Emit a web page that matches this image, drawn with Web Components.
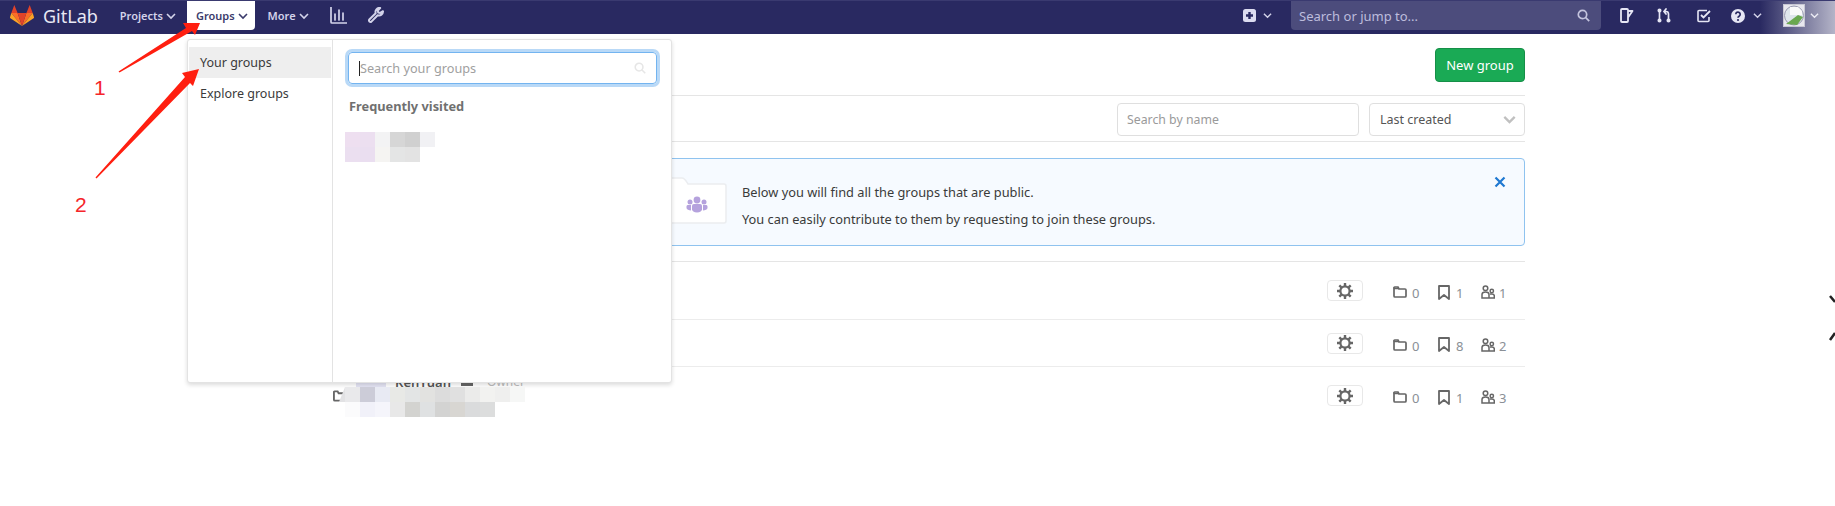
<!DOCTYPE html>
<html lang="en">
<head>
<meta charset="utf-8">
<title>Groups · GitLab</title>
<style>
html,body{margin:0;padding:0;background:#fff;}
body{width:1835px;height:506px;position:relative;overflow:hidden;font:13px/18px "Noto Sans","Open Sans",sans-serif;color:#2e2e2e;}
</style>
</head>
<body>
<gl-navbar></gl-navbar>
<gl-page>
  <group-row slot="rows" height="58" folders="0" projects="1" members="1"></group-row>
  <group-row slot="rows" height="47" folders="0" projects="8" members="2"></group-row>
  <group-row slot="rows" height="57" folders="0" projects="1" members="3" name="KenYuan" role="Owner"></group-row>
</gl-page>
<gl-groups-dropdown></gl-groups-dropdown>
<blur-mosaic style="left:345px;top:132px" rows="eedff0,ecdff0,f3f3f4,d6d6d6,d0d0d0,f1f1f4|ebdff0,eadef0,f5f4f2,e4e5e5,e3e3e3"></blur-mosaic>
<blur-mosaic wedge style="left:345px;top:387px" rows="e9e9eb,ccccd8,e8eaf3,e8e9e6,e3e5e5,e2e2e0,dcdcdc,e0e0e0,ebebea,f2f2f0,efefee,f6f7f6|fbfbfc,f1f1f9,f5f5fb,e8e8e8,d3d3d0,dfe1e2,d3d3d2,d8d6d2,dadbdc,dcdddd"></blur-mosaic>
<red-annotations></red-annotations>
<edge-marks></edge-marks>

<script>
const NS = '"Noto Sans","Open Sans",sans-serif';
const chev = (w=9,c='currentColor',sw=1.7)=>`<svg width="${w}" height="${w}" viewBox="0 0 10 10" fill="none" stroke="${c}" stroke-width="${sw}"><path d="M1 3l4 4 4-4"/></svg>`;

class Base extends HTMLElement{
  render(html){ if(!this.shadowRoot) this.attachShadow({mode:'open'}); this.shadowRoot.innerHTML = html; }
}

class NavLink extends Base{
  connectedCallback(){
    const active = this.hasAttribute('active');
    this.render(`<style>
      :host{display:flex;align-items:center;gap:3px;height:29px;box-sizing:border-box;font-weight:600;font-size:11px;
        padding:0 9px;color:${active?'#3b3b6b':'#d3d3ea'};background:${active?'#fff':'transparent'};border-radius:${active?'0 0 4px 4px':'0'};}
      svg{display:block}
    </style><slot></slot>${chev(10,'currentColor',1.6)}`);
  }
}
customElements.define('nav-link',NavLink);

class GlNavbar extends Base{
  connectedCallback(){
    this.render(`<style>
      :host{display:flex;box-sizing:border-box;height:34px;border-top:1px solid #3a3a70;align-items:flex-start;color:#d3d3ea;
        background:linear-gradient(90deg,#292961 0,#292961 1760px,#b4b4c8 1835px);font-family:${NS};}
      .logo{display:flex;align-items:center;height:29px;margin-left:10px;gap:9px;color:#e8e8f4;font-size:18px;}
      svg{display:block;flex:none}
      .links{display:flex;}
      .ic{margin-top:6px}
      .search{box-sizing:border-box;width:310px;height:29px;background:#4c4c7c;border-radius:0 0 4px 4px;display:flex;align-items:center;justify-content:space-between;padding:0 11px 0 8px;color:#bdbddc;font-size:13px;margin-left:19px;}
      .right{margin-left:auto;display:flex;align-items:flex-start;}
      .pad{height:29px;display:flex;align-items:center;}
    </style>
    <div class="logo">
      <svg width="24" height="21" viewBox="0 0 24 21"><path fill="#fc6d26" d="M12 21L7.6 8H1.3zM12 21l4.4-13h6.3z"/><path fill="#e24329" d="M12 21L7.6 8h8.8zM1.3 8l3-8 3.3 8zM22.7 8l-3-8-3.3 8z"/><path fill="#fca326" d="M1.3 8L0 12.3c-.1.4 0 .8.4 1L12 21zM22.7 8l1.3 4.3c.1.4 0 .8-.4 1L12 21z"/></svg>
      <span>GitLab</span>
    </div>
    <div class="links" style="margin-left:13px">
      <nav-link style="padding:0 9px 0 9px;margin-right:2px">Projects</nav-link>
      <nav-link active style="padding:0 7px 0 9px">Groups</nav-link>
      <nav-link style="margin-left:4px">More</nav-link>
    </div>
    <svg class="ic" style="margin-left:12px" width="17" height="17" viewBox="0 0 17 17" fill="none" stroke="#d3d3ea" stroke-width="1.7"><path d="M1 0v15c0 .6.4 1 1 1h15"/><path d="M5 7v6M9 3v10M13 6v7" stroke-linecap="round"/></svg>
    <svg class="ic" style="margin-left:21px" width="16" height="16" viewBox="0 0 16 16" fill="none" stroke="#d3d3ea" stroke-width="2" stroke-linejoin="round"><path d="M15 4.2a4 4 0 0 1-5.3 4L3.400 14.600a1.500 1.500 0 0 1-2.100-2.100L7.700 6.200A4 4 0 0 1 12.200 1L9.800 3.500l.4 2 2 .4z"/></svg>
    <div class="right">
      <div class="pad" style="gap:7px">
        <svg width="13" height="13" viewBox="0 0 13 13"><rect width="13" height="13" rx="2.500" fill="#dcdcf0"/><path d="M6.500 3v7M3 6.500h7" stroke="#292961" stroke-width="2.400"/></svg>
        ${chev(9,'#d3d3ea',1.5)}
      </div>
      <div class="search"><span>Search or jump to...</span>
        <svg width="13" height="13" viewBox="0 0 13 13" fill="none" stroke="#c4c4de" stroke-width="1.700"><circle cx="5.500" cy="5.500" r="4.200"/><path d="M8.700 8.700l3.500 3.500"/></svg>
      </div>
      <div class="pad" style="margin-left:18px;width:14px">
        <svg width="15" height="15" viewBox="0 0 15 15" fill="none" stroke="#e6e6f4" stroke-width="1.800" stroke-linejoin="round"><path d="M2 2a1 1 0 0 1 1-1h5a1 1 0 0 1 1 1v11a1 1 0 0 1-1 1H3a1 1 0 0 1-1-1zM9 3h4.500L9 9.500"/></svg>
      </div>
      <div class="pad" style="margin-left:24px;width:14px">
        <svg width="15" height="15" viewBox="0 0 15 15" fill="none" stroke="#e6e6f4" stroke-width="1.700" stroke-linecap="round"><path d="M2.500 3v9M11.500 12V6a2.500 2.500 0 0 0-2.500-2.500H7.500M9 1L7 3.500 9 6"/><circle cx="2.500" cy="2.500" r="1.200" fill="#e6e6f4"/><circle cx="2.500" cy="12.500" r="1.200" fill="#e6e6f4"/><circle cx="11.500" cy="12.500" r="1.200" fill="#e6e6f4"/></svg>
      </div>
      <div class="pad" style="margin-left:26px;width:13px">
        <svg width="14" height="14" viewBox="0 0 14 14" fill="none" stroke="#e6e6f4" stroke-width="1.600"><path d="M12 8v3.500a1 1 0 0 1-1 1H2a1 1 0 0 1-1-1v-9a1 1 0 0 1 1-1h8"/><path d="M4 6l2.500 2.500L13 2" stroke-width="1.800"/></svg>
      </div>
      <div class="pad" style="margin-left:21px;gap:8px">
        <svg width="14" height="14" viewBox="0 0 14 14"><circle cx="7" cy="7" r="7" fill="#e6e6f4"/><path d="M4.800 5.200a2.200 2.200 0 1 1 3.300 2c-.8.5-1.100.8-1.100 1.600" fill="none" stroke="#292961" stroke-width="1.700"/><circle cx="7" cy="11" r="1.100" fill="#292961"/></svg>
        ${chev(9,'#d3d3ea',1.500)}
      </div>
      <div class="pad" style="margin-left:21px;gap:5px;margin-right:16px">
        <svg width="22" height="23" viewBox="0 0 22 23"><rect x=".5" y=".5" width="21" height="22" fill="#e8e8ee" stroke="#c8c8d4"/><circle cx="11" cy="11.500" r="9.500" fill="#dfe6ec" stroke="#9a9ab0"/><path d="M3 20l12-9 5 2-6 8z" fill="#6aa84f"/><path d="M7 3h8l4 4v4H7z" fill="#fafafa"/></svg>
        ${chev(9,'#ececf4',1.500)}
      </div>
    </div>`);
  }
}
customElements.define('gl-navbar',GlNavbar);

class GlPage extends Base{
  connectedCallback(){
    this.render(`<style>
      :host{display:block;box-sizing:border-box;width:1192px;margin-left:333px;font-family:${NS};font-size:13px;color:#2e2e2e;}
      .head{display:flex;justify-content:flex-end;align-items:center;height:62px;border-bottom:1px solid #e5e5e5;box-sizing:border-box;}
      .btn{box-sizing:border-box;width:90px;height:34px;background:#1aaa55;border:1px solid #168f48;border-radius:4px;color:#fff;display:flex;align-items:center;justify-content:center;font-size:13px;}
      .filter{display:flex;justify-content:flex-end;gap:10px;height:46px;box-sizing:border-box;padding-top:7px;border-bottom:1px solid #e5e5e5;}
      .input,.select{box-sizing:border-box;height:33px;border:1px solid #dfdfdf;border-radius:4px;display:flex;align-items:center;padding:0 9px;background:#fff;}
      .input{width:242px;color:#9a9a9a;font-size:12.300px;}
      .select{width:156px;padding:0 8px 0 10px;justify-content:space-between;color:#555;font-size:12.500px;}
      .rows{border-top:1px solid #e5e5e5;margin-top:15px;}
    </style>
    <div class="head"><div class="btn">New group</div></div>
    <div class="filter">
      <div class="input">Search by name</div>
      <div class="select"><span>Last created</span>${chev(13,'#c0c0c0',1.800)}</div>
    </div>
    <gl-callout></gl-callout>
    <div class="rows"><slot name="rows"></slot></div>`);
  }
}
customElements.define('gl-page',GlPage);

class GlCallout extends Base{
  connectedCallback(){
    this.render(`<style>
      :host{display:flex;box-sizing:border-box;height:88px;margin-top:16px;background:#f6faff;border:1px solid #8fc3ef;border-radius:4px;position:relative;font-size:12.800px;color:#3a3a3a;}
      .art{flex:none;margin-left:326px;margin-top:18px}
      .text{margin-left:14px;display:flex;flex-direction:column;gap:9px;padding-top:24px;}
      .x{position:absolute;right:18px;top:17px;}
      svg{display:block}
    </style>
    <svg class="art" width="68" height="48" viewBox="0 0 68 48"><path d="M0 1h22c3 0 4 3 6 6h36a2 2 0 0 1 2 2v35a2 2 0 0 1-2 2H0" fill="#fff" stroke="#ebedf0" stroke-width="1.500"/>
      <g fill="#b5a2dd" transform="translate(-49 -1)"><circle cx="86" cy="24" r="3.400"/><circle cx="79" cy="26" r="2.500"/><circle cx="93" cy="26" r="2.500"/><path d="M81 30a2 2 0 0 1 2-2h6a2 2 0 0 1 2 2v3.500c0 1.500-2 3-5 3s-5-1.500-5-3z"/><path d="M75.500 30.500c0-1 .8-1.500 1.500-1.500h3v5.500c-2 0-4.500-1-4.500-2.500zM96.500 30.500c0-1-.8-1.500-1.500-1.500h-3v5.500c2 0 4.500-1 4.500-2.500z"/></g></svg>
    <div class="text"><div>Below you will find all the groups that are public.</div><div>You can easily contribute to them by requesting to join these groups.</div></div>
    <svg class="x" width="12" height="12" viewBox="0 0 12 12" stroke="#1f78d1" stroke-width="2.200" fill="none"><path d="M1.500 1.500l9 9M10.500 1.500l-9 9"/></svg>`);
  }
}
customElements.define('gl-callout',GlCallout);

class StatItem extends Base{
  connectedCallback(){
    const k=this.getAttribute('kind');
    const icons={
      folder:`<svg width="14" height="12" viewBox="0 0 14 12" fill="none" stroke="#666" stroke-width="1.700"><path d="M1 2.500V10a1 1 0 0 0 1 1h10a1 1 0 0 0 1-1V4a1 1 0 0 0-1-1H6L5 1H2a1 1 0 0 0-1 1.500z"/><path d="M1 2.500h5" stroke-width="1.500"/></svg>`,
      book:`<svg width="12" height="15" viewBox="0 0 12 15" fill="none" stroke="#666" stroke-width="1.800" stroke-linejoin="round"><path d="M1 1h10v13l-5-4-5 4z"/></svg>`,
      users:`<svg width="14" height="14" viewBox="0 0 14 14" fill="none" stroke="#666" stroke-width="1.500"><circle cx="4.500" cy="3.200" r="2.300"/><circle cx="10.800" cy="6" r="1.700"/><path d="M1 13V9.500C1 8 2.500 7 4.500 7S8 8 8 9.500V13zM8 13h5.300v-2c0-1.200-1-2-2.500-2H9"/></svg>`
    };
    this.render(`<style>
      :host{display:flex;align-items:center;gap:var(--g,6px);font-size:13px;color:#8a8f96;width:var(--w,auto);}
      svg{display:block;flex:none;margin-top:-2px}
    </style>${icons[k]}<slot></slot>`);
  }
}
customElements.define('stat-item',StatItem);

class GroupRow extends Base{
  connectedCallback(){
    const a=n=>this.getAttribute(n);
    const name=a('name');
    this.render(`<style>
      :host{display:flex;align-items:center;box-sizing:border-box;height:${a('height')}px;border-bottom:1px solid #ececec;font-family:${NS};position:relative;}
      :host(:last-child){border-bottom:0}
      .left{display:flex;align-items:center;flex:1;height:100%;}
      .av{width:30px;height:34px;background:#e4e4f4;margin-left:10px;flex:none;}
      .name{font-weight:600;font-size:13px;color:#555;align-self:flex-start;margin:6px 0 0 9px;}
      .badge{width:12px;height:12px;background:#666;margin:7px 0 0 10px;align-self:flex-start;}
      .role{align-self:flex-start;margin:6px 0 0 14px;color:#bbb;font-size:12px;}
      .gear{box-sizing:border-box;width:36px;height:21px;border:1px solid #e8e8e8;border-radius:4px;display:flex;align-items:center;justify-content:center;margin-right:30px;background:#fff;}
      .stats{display:flex;width:132px;margin-top:5px;}
      svg{display:block}
    </style>
    <div class="left">${name?`<svg width="13" height="12" viewBox="0 0 14 12" fill="none" stroke="#666" stroke-width="2"><path d="M1 2.500V10a1 1 0 0 0 1 1h10a1 1 0 0 0 1-1V4a1 1 0 0 0-1-1H6L5 1H2a1 1 0 0 0-1 1.500z"/></svg><div class="av"></div><div class="name">${name}</div><div class="badge"></div><div class="role">${a('role')}</div>`:''}</div>
    <div class="gear"><svg width="16" height="16" viewBox="0 0 16 16" fill="none" stroke="#666"><circle cx="8" cy="8" r="4.600" stroke-width="2.200"/><path stroke-width="2.400" d="M8 0v3M8 13v3M0 8h3M13 8h3M2.300 2.300l2.100 2.100M11.600 11.600l2.100 2.100M2.300 13.700l2.100-2.100M11.600 4.400l2.100-2.100"/></svg></div>
    <div class="stats">
      <stat-item kind="folder" style="--w:45px;--g:5px">${a('folders')}</stat-item>
      <stat-item kind="book" style="--w:43px">${a('projects')}</stat-item>
      <stat-item kind="users" style="--g:4px">${a('members')}</stat-item>
    </div>`);
  }
}
customElements.define('group-row',GroupRow);

class GlGroupsDropdown extends Base{
  connectedCallback(){
    this.render(`<style>
      :host{position:absolute;left:187px;top:39px;width:485px;height:344px;box-sizing:border-box;background:#fff;border:1px solid #e3e3e3;border-radius:3px;box-shadow:0 2px 4px rgba(0,0,0,.14);display:flex;font-family:${NS};font-size:13px;color:#2e2e2e;}
      .side{width:145px;box-sizing:border-box;border-right:1px solid #e3e3e3;padding:7px 1px 0 1px;flex:none;}
      .item{height:31px;display:flex;align-items:center;padding-left:11px;color:#3a3a3a;font-size:12.500px;}
      .item.on{background:#eee;}
      .main{flex:1;padding:12px 14px 0 15px;}
      .in{box-sizing:border-box;height:32px;border:1px solid #73b4f0;border-radius:4px;box-shadow:0 0 0 3px rgba(115,180,240,.5);display:flex;align-items:center;justify-content:space-between;padding:0 10px 0 10px;color:#a0a0a0;font-size:12.700px;}
      .caret{width:1px;height:15px;background:#222;flex:none;}
      .ph{flex:1;}
      h6{margin:13px 0 0 1px;font:700 12.800px/18px ${NS};color:#707070;}
      svg{display:block}
    </style>
    <div class="side"><div class="item on">Your groups</div><div class="item">Explore groups</div></div>
    <div class="main">
      <div class="in"><span class="caret"></span><span class="ph">Search your groups</span>
        <svg width="12" height="12" viewBox="0 0 13 13" fill="none" stroke="#e6e6e6" stroke-width="1.700"><circle cx="5.500" cy="5.500" r="4.200"/><path d="M8.700 8.700l3.500 3.500"/></svg></div>
      <h6>Frequently visited</h6>
    </div>`);
  }
}
customElements.define('gl-groups-dropdown',GlGroupsDropdown);

class BlurMosaic extends Base{
  connectedCallback(){
    const rows=this.getAttribute('rows').split('|').map(r=>r.split(','));
    const html=rows.map(r=>`<div class="r">${r.map(c=>`<i style="background:#${c}"></i>`).join('')}</div>`).join('');
    const wedge=this.hasAttribute('wedge')?`<svg style="position:absolute;left:-7px;top:0" width="7" height="15"><path d="M7 0L1 15H7z" fill="#e2e2e4"/></svg>`:'';
    this.render(`<style>:host{position:absolute;display:block}.r{display:flex;height:15px}i{display:block;width:15px;height:15px}</style>${wedge}${html}`);
  }
}
customElements.define('blur-mosaic',BlurMosaic);

class RedAnnotations extends Base{
  connectedCallback(){
    this.render(`<style>
      :host{position:absolute;left:0;top:0;width:300px;height:240px;display:block;pointer-events:none;font-family:"Liberation Sans",sans-serif;color:#f5252a;}
      svg{position:absolute;left:0;top:0}
      span{position:absolute;font-size:21px;line-height:21px;}
    </style>
    <svg width="300" height="240"><path fill="#ff1f10" d="M200 23L183 23 186 28 118.500 71.500 119.500 72.500 192 31 195 35z"/><path fill="#ff1f10" d="M199 69L182 73 185 77 95.500 177.500 96.500 178.500 190 83 193 86z"/></svg>
    <span style="left:94px;top:77px">1</span><span style="left:75px;top:194px">2</span>`);
  }
}
customElements.define('red-annotations',RedAnnotations);

class EdgeMarks extends Base{
  connectedCallback(){
    this.render(`<style>:host{position:absolute;right:0;top:290px;width:8px;height:60px;display:block}svg{display:block}</style>
    <svg width="8" height="60" viewBox="0 0 8 60" fill="none" stroke="#222" stroke-width="2.500"><path d="M3 6l5 6M8 43l-5 7"/></svg>`);
  }
}
customElements.define('edge-marks',EdgeMarks);
</script>
</body>
</html>
